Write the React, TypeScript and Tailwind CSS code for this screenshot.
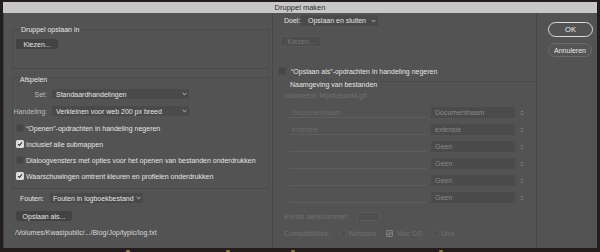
import React from "react";

function Chevron({ c = "#cfcfcf" }: { c?: string }) {
  return (
    <svg width="5" height="4" viewBox="0 0 5 4" className="shrink-0">
      <path d="M0.7 1 L2.5 2.8 L4.3 1" fill="none" stroke={c} strokeWidth="0.9" />
    </svg>
  );
}

function UpDown({ c = "#8a8a8a" }: { c?: string }) {
  return (
    <svg width="4" height="6" viewBox="0 0 4 6" className="shrink-0">
      <path d="M0.6 2.3 L2 0.9 L3.4 2.3 M0.6 3.7 L2 5.1 L3.4 3.7" fill="none" stroke={c} strokeWidth="0.8" />
    </svg>
  );
}

function Box({ checked, disabled }: { checked?: boolean; disabled?: boolean }) {
  if (disabled) {
    return (
      <div
        className={
          "w-[7px] h-[7px] rounded-[1px] shrink-0 flex items-center justify-center " +
          (checked ? "border border-[#7c7c7c] bg-[#5c5c5c]" : "border border-[#5a5a5a] bg-[#4f4f4f]")
        }
      >
        {checked && (
          <svg width="5" height="5" viewBox="0 0 5 5">
            <path d="M0.8 2.6 L2 3.8 L4.2 1" fill="none" stroke="#9a9a9a" strokeWidth="0.9" />
          </svg>
        )}
      </div>
    );
  }
  return (
    <div
      className={
        "w-[8px] h-[8px] rounded-[1.5px] shrink-0 flex items-center justify-center " +
        (checked ? "bg-[#dcdcdc]" : "bg-[#474747] border border-[#4c4c4c]")
      }
    >
      {checked && (
        <svg width="6" height="6" viewBox="0 0 6 6">
          <path d="M1 3.1 L2.4 4.5 L5 1.3" fill="none" stroke="#2e2e2e" strokeWidth="1.1" />
        </svg>
      )}
    </div>
  );
}

function CheckRow({ checked, text }: { checked?: boolean; text: string }) {
  return (
    <div className="h-[16px] flex items-center ml-[3px] gap-[2px]">
      <Box checked={checked} />
      <span className="text-[#e4e4e4] whitespace-nowrap">{text}</span>
    </div>
  );
}

function NamingRow({ left, right, leftText }: { left?: string; right: string; leftText?: boolean }) {
  return (
    <div className="h-[11px] flex items-center ml-[8px]">
      <div className="w-[138px] h-[11px] border-b border-[#5e5e5e] flex items-center pl-[3px] text-[#6b6b6b]">
        {leftText ? left : ""}
      </div>
      <div className="ml-[4px] w-[84px] h-[11px] bg-[#4b4b4b] flex items-center pl-[4px] text-[#8a8a8a]">
        {right}
      </div>
      <div className="ml-[5px]">
        <UpDown />
      </div>
    </div>
  );
}

export default function App() {
  return (
    <div className="w-[600px] h-[252px] bg-[#231d1e] overflow-hidden flex flex-col text-[7px] leading-none font-['Liberation_Sans',Arial,sans-serif]">
      <div className="h-[2px] shrink-0" />
      {/* title bar */}
      <div className="mx-[3px] h-[11px] shrink-0 bg-[#c8c8c8] flex items-center justify-center text-[7.5px] text-[#2c2c2c]">
        Druppel maken
      </div>
      {/* body */}
      <div className="mx-[3px] h-[235px] shrink-0 bg-[#535353] border-l border-[#3e3e3e] flex">
        {/* left column */}
        <div className="w-[269px] shrink-0 border-r border-[#484848] flex flex-col pt-[16px]">
          {/* group 1 */}
          <div className="ml-[8px] w-[257px] border border-[#4a4a4a] flex flex-col pb-[19px]">
            <div className="-mt-[6px] h-[10px] ml-[7px] px-[1px] self-start bg-[#535353] flex items-center text-[#e4e4e4]">
              Druppel opslaan in
            </div>
            <div className="mt-[5px] ml-[3px] w-[42px] h-[10px] bg-[#434343] rounded-[2px] flex items-center justify-center text-[#e4e4e4]">
              Kiezen...
            </div>
          </div>
          {/* group 2 */}
          <div className="mt-[8px] ml-[8px] w-[257px] border border-[#4a4a4a] flex flex-col pb-[4px]">
            <div className="-mt-[4px] h-[10px] ml-[6px] px-[1px] self-start bg-[#535353] flex items-center text-[#e4e4e4]">
              Afspelen
            </div>
            <div className="mt-[5px] h-[10px] flex items-center">
              <div className="w-[34px] text-right text-[#bdbdbd]">Set:</div>
              <div className="ml-[5px] w-[137px] h-[10px] bg-[#4a4a4a] flex items-center pl-[4px] pr-[2px] text-[#e4e4e4]">
                <span className="flex-1">Standaardhandelingen</span>
                <Chevron />
              </div>
            </div>
            <div className="mt-[7px] h-[10px] flex items-center">
              <div className="w-[34px] text-right text-[#bdbdbd]">Handeling:</div>
              <div className="ml-[5px] w-[137px] h-[10px] bg-[#4a4a4a] flex items-center pl-[4px] pr-[2px] text-[#e4e4e4]">
                <span className="flex-1">Verkleinen voor web 200 px breed</span>
                <Chevron />
              </div>
            </div>
            <div className="mt-[4px] flex flex-col">
              <CheckRow text={"\u201COpenen\u201D-opdrachten in handeling negeren"} />
              <CheckRow checked text="Inclusief alle submappen" />
              <CheckRow text="Dialoogvensters met opties voor het openen van bestanden onderdrukken" />
              <CheckRow checked text="Waarschuwingen omtrent kleuren en profielen onderdrukken" />
            </div>
          </div>
          {/* Fouten */}
          <div className="mt-[4px] h-[10px] flex items-center ml-[16px]">
            <span className="w-[30px] text-[#e4e4e4]">Fouten:</span>
            <div className="w-[93px] h-[10px] bg-[#4a4a4a] flex items-center pl-[3px] pr-[2px] text-[#e4e4e4]">
              <span className="flex-1">Fouten in logboekbestand</span>
              <Chevron />
            </div>
          </div>
          <div className="mt-[8px] ml-[12px] w-[56px] h-[10px] bg-[#434343] rounded-[3px] flex items-center justify-center text-[#e4e4e4]">
            Opslaan als...
          </div>
          <div className="mt-[6px] h-[10px] ml-[11px] flex items-center text-[#d8d8d8]">
            /Volumes/Kwasipublic/.../Blog/Jop/typic/log.txt
          </div>
        </div>

        {/* middle column */}
        <div className="w-[264px] shrink-0 border-r border-[#484848] flex flex-col pt-[2px]">
          <div className="h-[11px] flex items-center ml-[11px]">
            <span className="w-[17px] text-[#e4e4e4]">Doel:</span>
            <div className="w-[77px] h-[11px] bg-[#4a4a4a] flex items-center pl-[7px] pr-[2px] text-[#e4e4e4]">
              <span className="flex-1">Opslaan en sluiten</span>
              <Chevron />
            </div>
          </div>
          <div className="mt-[10px] ml-[7px] w-[42px] h-[11px] bg-[#4d4d4d] border border-[#585858] rounded-[2px] flex items-center justify-center text-[#777777]">
            Kiezen...
          </div>
          <div className="mt-[19px] h-[10px] flex items-center ml-[5px] gap-[5px]">
            <Box />
            <span className="text-[#e4e4e4]">{"\u201COpslaan als\u201D-opdrachten in handeling negeren"}</span>
          </div>
          {/* Naamgeving group */}
          <div className="mt-[3px] ml-[8px] w-[254px] flex flex-col pb-[5px]">
            <div className="h-[10px] flex items-center">
              <span className="ml-[9px] text-[#e4e4e4]">Naamgeving van bestanden</span>
              <div className="flex-1 ml-[3px] self-start mt-[2px] h-px bg-[#4a4a4a]" />
            </div>
            <div className="mt-[1px] h-[10px] ml-[3px] flex items-center text-[#707070]">
              Voorbeeld: Mijnbestand.gif
            </div>
            <div className="mt-[7px] flex flex-col gap-[6px]">
              <NamingRow leftText left="Documentnaam" right="Documentnaam" />
              <NamingRow leftText left="extensie" right="extensie" />
              <NamingRow right="Geen" />
              <NamingRow right="Geen" />
              <NamingRow right="Geen" />
              <NamingRow right="Geen" />
            </div>
          </div>
          <div className="mt-[3px] h-[10px] flex items-center ml-[11px] text-[#707070]">
            <span className="w-[73px]">Eerste serienummer:</span>
            <div className="w-[23px] h-[9px] border border-[#5a5a5a] bg-[#4f4f4f]" />
          </div>
          <div className="mt-[7px] h-[10px] flex items-center ml-[11px] text-[#707070]">
            <span className="w-[56px]">Compatibiliteit:</span>
            <Box disabled />
            <span className="ml-[1px] w-[38px]">Windows</span>
            <Box disabled checked />
            <span className="ml-[4px] w-[35px]">Mac OS</span>
            <Box disabled />
            <span className="ml-[2px]">Unix</span>
          </div>
        </div>

        {/* right column */}
        <div className="flex-1 flex flex-col">
          <div className="mt-[9px] ml-[11px] w-[45px] h-[15px] rounded-full border border-[#dadada] flex items-center justify-center text-[#f0f0f0] text-[7.5px]">
            OK
          </div>
          <div className="mt-[6px] ml-[11px] w-[44px] h-[14px] rounded-full border border-[#6a6a6a] bg-[#555555] flex items-center justify-center text-[#e8e8e8] text-[7px]">
            Annuleren
          </div>
        </div>
      </div>
      {/* bottom strip */}
      <div className="flex-1 flex items-end">
        <div className="ml-[126px] w-[4px] h-[2px] bg-[#8a7a3a] rounded-full" />
        <div className="ml-[96px] w-[4px] h-[2px] bg-[#8a7a3a] rounded-full" />
        <div className="ml-[61px] w-[4px] h-[2px] bg-[#8a7a3a] rounded-full" />
        <div className="ml-[144px] w-[4px] h-[2px] bg-[#8a7a3a] rounded-full" />
      </div>
    </div>
  );
}
